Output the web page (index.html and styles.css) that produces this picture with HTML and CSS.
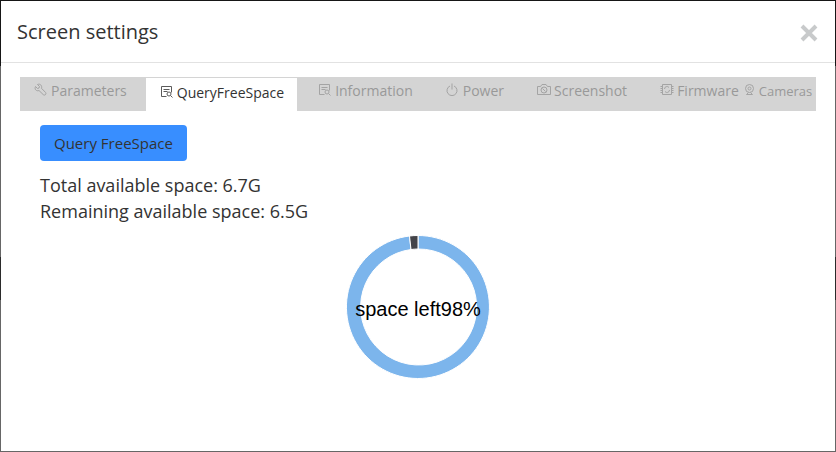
FILE: index.html
```
<!DOCTYPE html>
<html lang="en">
<head>
  <meta charset="UTF-8">
  <title>Screen settings</title>
  <meta name="viewport" content="width=device-width, initial-scale=1">
  <link rel="stylesheet" href="styles.css">
</head>
<body>
  <div class="modal" role="dialog" aria-labelledby="modal-title">
    <header class="modal-header">
      <h1 id="modal-title">Screen settings</h1>
      <button class="close" type="button" aria-label="Close">
        <svg width="18" height="18" viewBox="0 0 18 18"><path d="M2 2l14 14M16 2L2 16"/></svg>
      </button>
    </header>
    <div class="modal-body">
      <nav class="tabs" role="tablist">
        <button class="tab" type="button" role="tab">
          <svg class="icon" viewBox="0 0 14 14"><path d="M3.500 1.500L5.500 3.500 5 5 3.500 5.500 1.500 3.500C.2 6.500 2.500 8.500 5 7.500L9.300 11.700c1.600 1.200 3.400-.6 2.300-2.200L7.500 5.300C8.300 2.500 6 .3 3.500 1.500z"/></svg>
          Parameters
        </button>
        <button class="tab active" type="button" role="tab" aria-selected="true">
          <svg class="icon" viewBox="0 0 14 14"><path d="M6.500 11.500h-5v-10h10v6M3.500 4.500h6M3.500 6.500h4M10.500 10.500l2 2"/><circle cx="9" cy="9" r="2"/></svg>
          QueryFreeSpace
        </button>
        <button class="tab info" type="button" role="tab">
          <svg class="icon" viewBox="0 0 14 14"><path d="M6.500 11.500h-5v-10h10v6M3.500 4.500h6M3.500 6.500h4M10.500 10.500l2 2"/><circle cx="9" cy="9" r="2"/></svg>
          Information
        </button>
        <button class="tab" type="button" role="tab">
          <svg class="icon" viewBox="0 0 14 14"><path d="M4 3a5 5 0 1 0 4 0M6 .5v6"/></svg>
          Power
        </button>
        <button class="tab" type="button" role="tab">
          <svg class="icon" viewBox="0 0 14 14"><path d="M.5 3.500h3l1.500-2h4l1.500 2h3v8H.5z"/><circle cx="7" cy="7" r="3"/><path d="M5.500 5.500l3 3"/></svg>
          Screenshot
        </button>
        <button class="tab firmware" type="button" role="tab">
          <svg class="icon" viewBox="0 0 14 14"><path d="M2.500 1.500h9v10h-9zM.5 3.500h2M.5 5.500h2M.5 7.500h2M.5 9.500h2M11.500 3.500h2M11.500 5.500h2M11.500 7.500h2M11.500 9.500h2"/><path d="M4.500 6a2.500 2.500 0 0 1 4.500-1.500M9.500 7A2.500 2.500 0 0 1 5 8.500"/></svg>
          Firmware
        </button>
        <button class="tab cameras" type="button" role="tab">
          <svg class="icon" viewBox="0 0 12 14"><circle cx="5.500" cy="5.500" r="4"/><circle cx="5.500" cy="5.500" r="1.500"/><path d="M4.500 9.500l-2 2h6l-2-2"/></svg>
          Cameras
        </button>
      </nav>
      <section class="panel" role="tabpanel">
        <button class="query" type="button">Query FreeSpace</button>
        <p>Total available space: 6.7G</p>
        <p>Remaining available space: 6.5G</p>
        <svg class="chart" width="160" height="150" viewBox="0 0 160 150">
          <path class="left" d="M80 3.500A71.500 71.500 0 1 1 71.500 4L73 17.500A58 58 0 1 0 80 17z"/>
          <path class="used" d="M71.500 4A71.500 71.500 0 0 1 80 3.500V17A58 58 0 0 0 73 17.500z"/>
          <text x="80" y="84">space left98%</text>
        </svg>
      </section>
    </div>
  </div>
</body>
</html>
```
FILE: styles.css
```
* { box-sizing: border-box; }
body {
  margin: 0;
  padding: 1px;
  font-family: "Open Sans", sans-serif;
  color: #333;
  background: linear-gradient(#161616 66px, #666 66px, #666 257px, #2b2b2b 257px, #2b2b2b 300px, #666 300px);
}
button {
  font-family: inherit;
  border: none;
  cursor: pointer;
}
.modal {
  min-height: calc(100vh - 2px);
  background: #fff;
}
.modal-header {
  display: flex;
  align-items: center;
  justify-content: space-between;
  height: 62px;
  padding: 0 17px 0 16px;
  border-bottom: 1px solid #e2e2e2;
}
.modal-header h1 {
  margin: 0;
  font-size: 20px;
  font-weight: normal;
}
.close {
  display: flex;
  padding: 2px 0 0;
  background: none;
}
.close path {
  stroke: #c8cacb;
  stroke-width: 4;
}
.modal-body { padding: 14px 19px; }
.tabs {
  display: flex;
  height: 34px;
  background: #d4d4d4;
}
.tab {
  display: flex;
  align-items: flex-start;
  gap: 3px;
  padding: 4px 19px 0 14px;
  font-size: 14px;
  line-height: 20px;
  white-space: nowrap;
  color: #999;
  background: none;
}
.tab.active {
  padding: 5px 13px 0 14px;
  color: #333;
  background: #fff;
  border-top: 1px solid #d4d4d4;
}
.tab.info { margin-left: 7px; }
.tab.firmware { padding-right: 3px; }
.tab.cameras {
  padding-left: 2px;
  padding-right: 4px;
  font-size: 13px;
}
.icon {
  width: 14px;
  height: 14px;
  margin-top: 2px;
  flex: none;
  fill: none;
  stroke: currentColor;
  stroke-width: 1;
  opacity: 0.8;
}
.cameras .icon { width: 12px; }
.panel { padding: 14px 20px; }
.query {
  display: block;
  height: 36px;
  margin-bottom: 11px;
  padding: 0 14px;
  font-size: 15px;
  color: #333;
  background: #388eff;
  border-radius: 4px;
}
.panel p {
  margin: 0;
  font-size: 18px;
  line-height: 26px;
}
.chart {
  display: block;
  margin: 8px auto 0;
}
.chart .left { fill: #7cb5ec; }
.chart .used { fill: #434348; }
.chart path {
  stroke: #fff;
  stroke-width: 1;
}
.chart text {
  font-family: "Liberation Sans", Arial, sans-serif;
  font-size: 20px;
  text-anchor: middle;
  fill: #000;
}
```
